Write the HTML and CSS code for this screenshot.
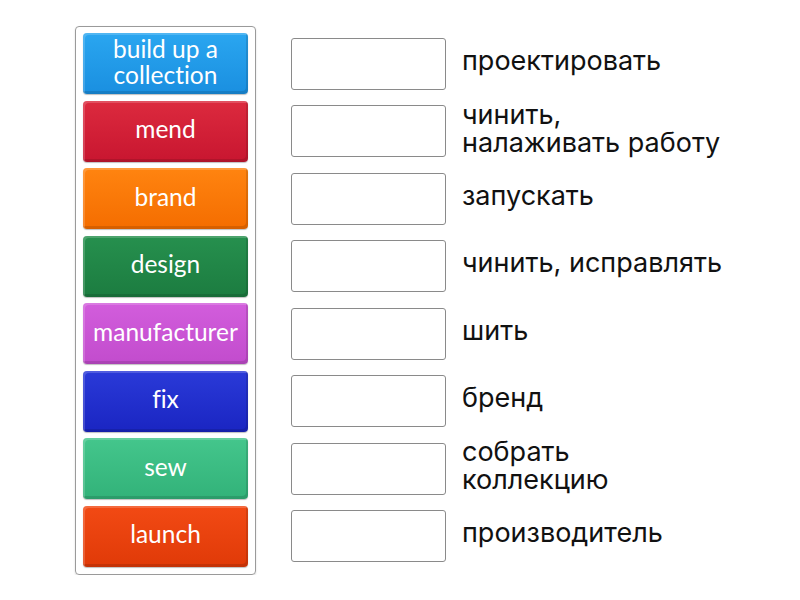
FILE: index.html
```html
<!DOCTYPE html>
<html>
<head>
<meta charset="utf-8">
<link rel="stylesheet" href="styles.css">
</head>
<body>
<div class="page">
  <div class="panel">
    <div class="tile c1">build up a collection</div>
    <div class="tile c2">mend</div>
    <div class="tile c3">brand</div>
    <div class="tile c4">design</div>
    <div class="tile c5">manufacturer</div>
    <div class="tile c6">fix</div>
    <div class="tile c7">sew</div>
    <div class="tile c8">launch</div>
  </div>
  <div class="rows">
    <div class="row"><div class="box"></div><div class="label">проектировать</div></div>
    <div class="row"><div class="box"></div><div class="label two">чинить,<br>налаживать работу</div></div>
    <div class="row"><div class="box"></div><div class="label">запускать</div></div>
    <div class="row"><div class="box"></div><div class="label">чинить, исправлять</div></div>
    <div class="row"><div class="box"></div><div class="label">шить</div></div>
    <div class="row"><div class="box"></div><div class="label">бренд</div></div>
    <div class="row"><div class="box"></div><div class="label two">собрать<br>коллекцию</div></div>
    <div class="row"><div class="box"></div><div class="label">производитель</div></div>
  </div>
</div>
</body>
</html>
```

FILE: styles.css
```css
html, body {
  margin: 0;
  padding: 0;
  background: #ffffff;
}
.page {
  display: flex;
  align-items: flex-start;
  padding: 26px 0 0 75px;
}
.panel {
  width: 165px;
  border: 1px solid #9a9a9a;
  border-radius: 4px;
  padding: 6px 7px 7px 7px;
  display: flex;
  flex-direction: column;
  gap: 6.5px;
  box-shadow: 0 1px 2px rgba(0,0,0,0.15);
}
.tile {
  height: 61px;
  border-radius: 4px;
  display: flex;
  align-items: center;
  justify-content: center;
  text-align: center;
  color: #ffffff;
  font-family: Lato, "Open Sans", sans-serif;
  font-size: 24.5px;
  line-height: 26px;
  font-variant-ligatures: none;
  padding: 0 4px 4px 4px;
  box-sizing: border-box;
  box-shadow: inset 2px 2px 0 rgba(255,255,255,0.18), inset -2px -3px 0 rgba(0,0,0,0.12), 0 1px 1px rgba(0,0,0,0.25);
}
.c1 { background: linear-gradient(#2aa6f0, #1a8fe0); }
.c2 { background: linear-gradient(#dc2a3e, #c81630); }
.c3 { background: linear-gradient(#ff8410, #f46d00); }
.c4 { background: linear-gradient(#26904e, #1c7c40); }
.c5 { background: linear-gradient(#d25ddc, #c24ccd); }
.c6 { background: linear-gradient(#2a3ad8, #1a25c2); }
.c7 { background: linear-gradient(#44c68c, #32b279); }
.c8 { background: linear-gradient(#f24a14, #e03a08); }
.rows {
  margin-left: 35px;
  padding-top: 7px;
  display: flex;
  flex-direction: column;
  gap: 6.5px;
}
.row {
  height: 61px;
  display: flex;
  align-items: center;
}
.box {
  width: 153px;
  height: 50px;
  border: 1px solid #8a8a8a;
  border-radius: 3px;
  background: #fff;
  flex: none;
}
.label {
  margin-left: 16px;
  font-family: Inter, Roboto, "Liberation Sans", sans-serif;
  font-size: 27px;
  line-height: 29px;
  color: #111111;
  margin-top: -7px;
}
.label.two {
  line-height: 28px;
  margin-top: -5px;
}
```
